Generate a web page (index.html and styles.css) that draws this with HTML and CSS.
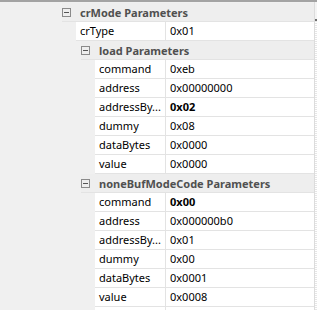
FILE: index.html
```html
<!DOCTYPE html>
<html lang="en">
  <head>
    <meta charset="UTF-8" />
    <title>Properties</title>
    <link rel="stylesheet" href="styles.css">
  </head>
  <body>
    <div class="panel">
      <div class="tree">
        <div class="row group l1"><span class="toggle"></span><span class="caption">crMode Parameters</span></div>
        <div class="row prop l1"><div class="name">crType</div><div class="value">0x01</div></div>

        <div class="row group l2"><span class="toggle"></span><span class="caption">load Parameters</span></div>
        <div class="row prop l2"><div class="name">command</div><div class="value">0xeb</div></div>
        <div class="row prop l2"><div class="name">address</div><div class="value">0x00000000</div></div>
        <div class="row prop l2"><div class="name">addressBy...</div><div class="value bold">0x02</div></div>
        <div class="row prop l2"><div class="name">dummy</div><div class="value">0x08</div></div>
        <div class="row prop l2"><div class="name">dataBytes</div><div class="value">0x0000</div></div>
        <div class="row prop l2"><div class="name">value</div><div class="value">0x0000</div></div>

        <div class="row group l2"><span class="toggle"></span><span class="caption">noneBufModeCode Parameters</span></div>
        <div class="row prop l2"><div class="name">command</div><div class="value bold">0x00</div></div>
        <div class="row prop l2"><div class="name">address</div><div class="value">0x000000b0</div></div>
        <div class="row prop l2"><div class="name">addressBy...</div><div class="value">0x01</div></div>
        <div class="row prop l2"><div class="name">dummy</div><div class="value">0x00</div></div>
        <div class="row prop l2"><div class="name">dataBytes</div><div class="value">0x0001</div></div>
        <div class="row prop l2"><div class="name">value</div><div class="value">0x0008</div></div>
        <div class="row prop l2"><div class="name"></div><div class="value"></div></div>
      </div>
      <div class="scrollbar"><div class="scroll-btn"></div></div>
    </div>
  </body>
</html>
```

FILE: styles.css
```css
body {
  margin: 0;
  background-color: #f0f0f0;
  font-family: "Noto Sans", sans-serif;
  font-size: 11px;
  color: #000;
}

.panel {
  display: flex;
  height: 310px;
  overflow: hidden;
  border-top: 2px solid #a3a3a3;
  box-sizing: border-box;
}

.tree {
  width: 314px;
  padding-top: 1px;
  border-right: 1px solid #dcdcdc;
}

.row {
  display: flex;
  align-items: center;
  height: 18px;
  border-bottom: 1px solid #e3e3e3;
  white-space: nowrap;
}

.group {
  background-color: #eeeeee;
}

.group.l1 {
  margin-left: 62px;
}

.group.l2 {
  margin-left: 81px;
}

.toggle {
  width: 7px;
  height: 7px;
  border: 1px solid #8a8a8a;
  position: relative;
  margin-right: 9px;
}

.toggle::after {
  content: "";
  position: absolute;
  left: 1px;
  top: 3px;
  width: 5px;
  height: 1px;
  background-color: #555;
}

.caption {
  font-weight: bold;
  color: #505050;
}

.prop {
  background-color: #fff;
}

.prop.l1 {
  margin-left: 76px;
}

.prop.l2 {
  margin-left: 95px;
}

.name {
  box-sizing: border-box;
  height: 18px;
  line-height: 18px;
  padding-left: 4px;
  border-right: 1px solid #e3e3e3;
}

.l1 .name {
  width: 90px;
}

.l2 .name {
  width: 71px;
}

.value {
  padding-left: 4px;
  line-height: 18px;
}

.bold {
  font-weight: bold;
}

.scrollbar {
  width: 2px;
  background: repeating-linear-gradient(0deg, #e6e6e6 0 1px, #fff 1px 2px);
}

.scroll-btn {
  height: 17px;
  background-color: #f4f4f4;
  border-bottom: 2px solid #6e6e6e;
}
```
